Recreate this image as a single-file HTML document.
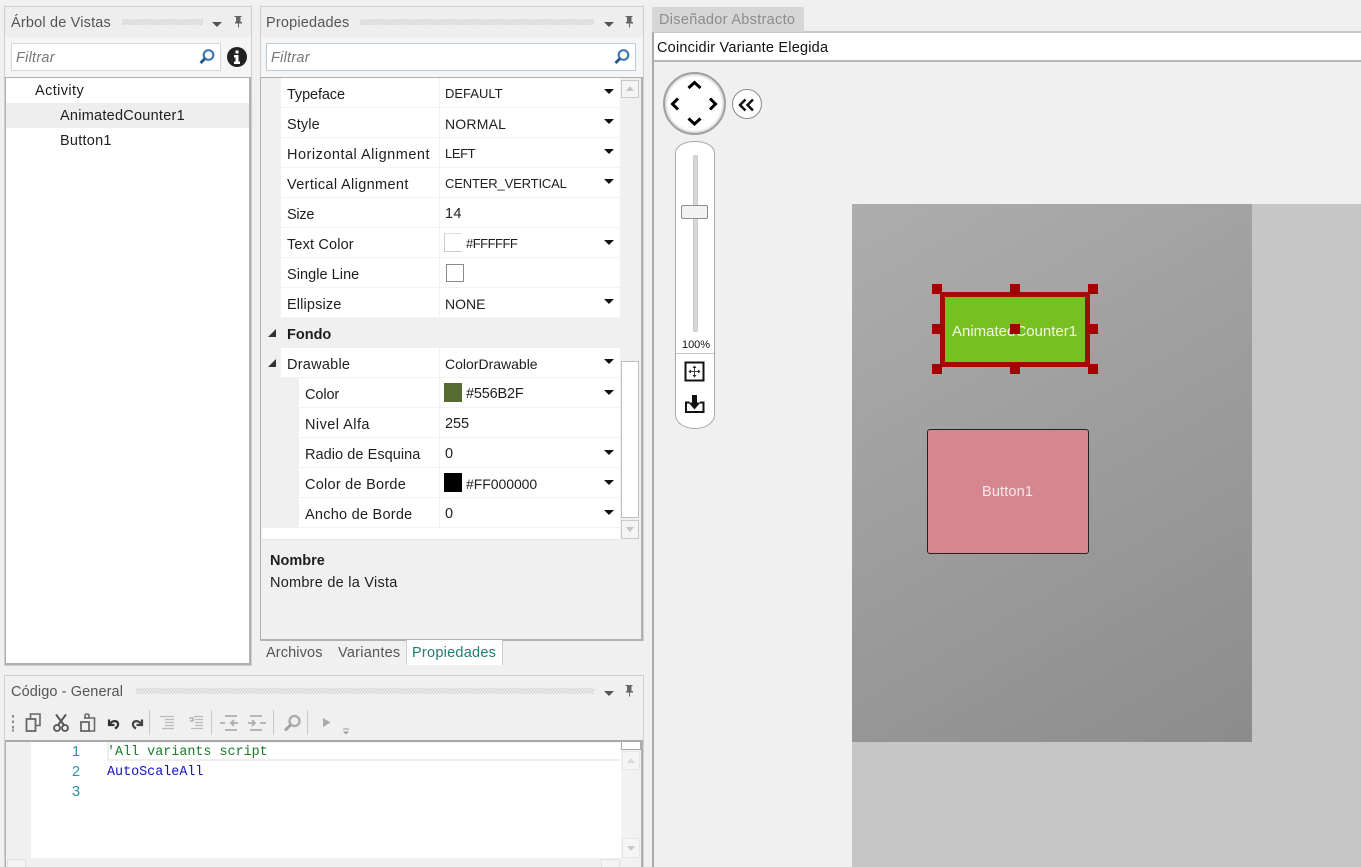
<!DOCTYPE html>
<html><head><meta charset="utf-8">
<style>
html,body{margin:0;padding:0;width:1361px;height:867px;overflow:hidden;background:#f0f0f0}
body{position:relative;font-family:"Liberation Sans",sans-serif;font-size:14.5px;color:#1e1e1e}
.b{position:absolute;box-sizing:border-box}
.t{position:absolute;white-space:nowrap;line-height:20px;letter-spacing:.25px;margin-top:1px}
.g{color:#555}
.it{font-style:italic;color:#777}
.grip{position:absolute;height:6px;background:repeating-conic-gradient(#d2d2d2 0 25%,transparent 0 50%) 0 0/3px 3px}
.dd{position:absolute;width:0;height:0;border-left:5px solid transparent;border-right:5px solid transparent;border-top:5px solid #111;margin-top:-1px}
.row{position:absolute;left:281px;width:339px;height:29px;background:#fff;border-bottom:1px solid #f2f2f2}
.sub{left:299px;width:321px}
.v{position:absolute;left:439px;width:1px;background:#f0f0f0}
svg{position:absolute;overflow:visible}
.mono{position:absolute;font-family:"Liberation Mono",monospace;font-size:13.4px;line-height:20px;white-space:pre}
</style></head><body>

<!-- LEFT PANEL -->
<div class="b" style="left:4px;top:6px;width:248px;height:660px;border:1px solid #cfcfcf;background:#f5f5f5"></div>
<div class="b" style="left:5px;top:7px;width:246px;height:30px;background:#eee"></div>
<div class="t g" style="left:11px;top:12px;letter-spacing:.18px">Árbol de Vistas</div>
<div class="grip" style="left:122px;top:19px;width:81px"></div>
<div class="dd" style="left:212px;top:23px;border-top-color:#555"></div>
<svg style="left:232px;top:15px" width="12" height="14" viewBox="0 0 12 14"><path d="M2.500 1h7v1h-1v5h1.500v1.500h-3v4h-1v-4h-3V7H4V2H2.500z" fill="#666"/></svg>
<div class="b" style="left:11px;top:43px;width:210px;height:28px;background:#fff;border:1px solid #d6d6d6"></div>
<div class="t it" style="left:16px;top:47px">Filtrar</div>
<svg style="left:198px;top:48px" width="18" height="18" viewBox="0 0 18 18"><circle cx="10.500" cy="7" r="4.800" fill="none" stroke="#3f78b4" stroke-width="2.200"/><path d="M7 10.500L2.500 15" stroke="#27557f" stroke-width="2.800"/></svg>
<svg style="left:227px;top:47px" width="20" height="20" viewBox="0 0 20 20"><circle cx="10" cy="10" r="10" fill="#222"/><path d="M8.500 3.500h3v3h-3zM7 8h4.500v6.500H13V17H7v-2.500h1.500V10.500H7z" fill="#fff"/></svg>
<div class="b" style="left:5px;top:77px;width:246px;height:588px;background:#fff;border:1px solid #b0b0b0;border-right-width:2px;border-bottom-width:2px"></div>
<div class="b" style="left:6px;top:103px;width:243px;height:25px;background:#eee"></div>
<div class="t" style="left:35px;top:80px;letter-spacing:.4px">Activity</div>
<div class="t" style="left:60px;top:105px">AnimatedCounter1</div>
<div class="t" style="left:60px;top:130px">Button1</div>

<!-- PROPERTIES PANEL -->
<div class="b" style="left:260px;top:6px;width:384px;height:635px;border:1px solid #cfcfcf;background:#f5f5f5"></div>
<div class="b" style="left:261px;top:7px;width:382px;height:30px;background:#eee"></div>
<div class="t g" style="left:266px;top:12px;letter-spacing:.18px">Propiedades</div>
<div class="grip" style="left:360px;top:19px;width:234px"></div>
<div class="dd" style="left:604px;top:23px;border-top-color:#555"></div>
<svg style="left:623px;top:15px" width="12" height="14" viewBox="0 0 12 14"><path d="M2.500 1h7v1h-1v5h1.500v1.500h-3v4h-1v-4h-3V7H4V2H2.500z" fill="#666"/></svg>
<div class="b" style="left:266px;top:43px;width:370px;height:28px;background:#fff;border:1px solid #b4cde0"></div>
<div class="t it" style="left:271px;top:47px">Filtrar</div>
<svg style="left:613px;top:48px" width="18" height="18" viewBox="0 0 18 18"><circle cx="10.500" cy="7" r="4.800" fill="none" stroke="#3f78b4" stroke-width="2.200"/><path d="M7 10.500L2.500 15" stroke="#27557f" stroke-width="2.800"/></svg>
<div class="b" style="left:260px;top:77px;width:383px;height:564px;background:#f0f0f0;border:1px solid #b0b0b0;border-right-width:2px;border-bottom-width:2px"></div>

<div class="row" style="top:78px"></div><div class="row" style="top:108px"></div><div class="row" style="top:138px"></div><div class="row" style="top:168px"></div><div class="row" style="top:198px"></div><div class="row" style="top:228px"></div><div class="row" style="top:258px"></div><div class="row" style="top:288px"></div>
<div class="row" style="top:348px"></div>
<div class="row sub" style="top:378px"></div><div class="row sub" style="top:408px"></div><div class="row sub" style="top:438px"></div><div class="row sub" style="top:468px"></div><div class="row sub" style="top:498px"></div>
<div class="b" style="left:262px;top:528px;width:358px;height:12px;background:#fff;border-bottom:1px solid #e8e8e8"></div>
<div class="v" style="top:78px;height:240px"></div>
<div class="v" style="top:348px;height:180px"></div>

<div class="t" style="left:287px;top:84px;letter-spacing:-.12px">Typeface</div><div class="t" style="left:445px;top:83px;font-size:13px;letter-spacing:0">DEFAULT</div><div class="dd" style="left:604px;top:90px"></div>
<div class="t" style="left:287px;top:114px;letter-spacing:.1px">Style</div><div class="t" style="left:445px;top:113px;font-size:14px;letter-spacing:.2px">NORMAL</div><div class="dd" style="left:604px;top:120px"></div>
<div class="t" style="left:287px;top:144px;letter-spacing:.5px">Horizontal Alignment</div><div class="t" style="left:445px;top:143px;font-size:13px;letter-spacing:-.4px">LEFT</div><div class="dd" style="left:604px;top:150px"></div>
<div class="t" style="left:287px;top:174px;letter-spacing:.36px">Vertical Alignment</div><div class="t" style="left:445px;top:173px;font-size:13px;letter-spacing:-.15px">CENTER_VERTICAL</div><div class="dd" style="left:604px;top:180px"></div>
<div class="t" style="left:287px;top:204px;letter-spacing:-.25px">Size</div><div class="t" style="left:445px;top:203px">14</div>
<div class="t" style="left:287px;top:234px;letter-spacing:.15px">Text Color</div><div class="b" style="left:444px;top:233px;width:18px;height:19px;background:#fff;border:1px solid #ccc;border-right:0;border-top:1px solid #ddd"></div><div class="t" style="left:466px;top:233px;font-size:13px;letter-spacing:-.5px">#FFFFFF</div><div class="dd" style="left:604px;top:241px"></div>
<div class="t" style="left:287px;top:264px;letter-spacing:.05px">Single Line</div><div class="b" style="left:446px;top:264px;width:18px;height:18px;background:#fff;border:1px solid #8a8a8a"></div>
<div class="t" style="left:287px;top:294px;letter-spacing:.14px">Ellipsize</div><div class="t" style="left:445px;top:293px;font-size:14px;letter-spacing:0">NONE</div><div class="dd" style="left:604px;top:300px"></div>

<svg style="left:267px;top:328px" width="10" height="10"><path d="M9 1v8H1z" fill="#333"/></svg>
<div class="t" style="left:287px;top:324px;font-weight:bold;letter-spacing:0">Fondo</div>
<svg style="left:267px;top:358px" width="10" height="10"><path d="M9 1v8H1z" fill="#333"/></svg>
<div class="t" style="left:287px;top:354px">Drawable</div><div class="t" style="left:445px;top:353px;font-size:14px;letter-spacing:0">ColorDrawable</div><div class="dd" style="left:604px;top:360px"></div>
<div class="t" style="left:305px;top:384px;letter-spacing:-.1px">Color</div><div class="b" style="left:444px;top:383px;width:18px;height:19px;background:#556B2F"></div><div class="t" style="left:466px;top:383px;letter-spacing:-.18px">#556B2F</div><div class="dd" style="left:604px;top:391px"></div>
<div class="t" style="left:305px;top:414px;letter-spacing:.45px">Nivel Alfa</div><div class="t" style="left:445px;top:413px;letter-spacing:-.08px">255</div>
<div class="t" style="left:305px;top:444px;letter-spacing:.06px">Radio de Esquina</div><div class="t" style="left:445px;top:443px">0</div><div class="dd" style="left:604px;top:451px"></div>
<div class="t" style="left:305px;top:474px">Color de Borde</div><div class="b" style="left:444px;top:473px;width:18px;height:19px;background:#000"></div><div class="t" style="left:466px;top:473px;font-size:14px;letter-spacing:-.05px">#FF000000</div><div class="dd" style="left:604px;top:481px"></div>
<div class="t" style="left:305px;top:504px">Ancho de Borde</div><div class="t" style="left:445px;top:503px">0</div><div class="dd" style="left:604px;top:511px"></div>

<!-- prop scrollbar -->
<div class="b" style="left:621px;top:80px;width:18px;height:18px;border:1px solid #c8c8c8;background:#f4f4f4"></div>
<svg style="left:625px;top:85px" width="10" height="7"><path d="M5 1l4 5H1z" fill="#c4c4c4"/></svg>
<div class="b" style="left:621px;top:361px;width:18px;height:157px;border:1px solid #bdbdbd;background:#fff"></div>
<div class="b" style="left:621px;top:520px;width:18px;height:19px;border:1px solid #c8c8c8;background:#f4f4f4"></div>
<svg style="left:625px;top:526px" width="10" height="7"><path d="M1 1h8L5 6z" fill="#c4c4c4"/></svg>

<div class="t" style="left:270px;top:550px;font-weight:bold;letter-spacing:0">Nombre</div>
<div class="t" style="left:270px;top:572px;letter-spacing:.25px">Nombre de la Vista</div>

<!-- tabs -->
<div class="t g" style="left:266px;top:642px;letter-spacing:.12px">Archivos</div>
<div class="t g" style="left:338px;top:642px">Variantes</div>
<div class="b" style="left:406px;top:640px;width:97px;height:25px;background:#fff;border-left:1px solid #ccc;border-right:1px solid #ccc"></div>
<div class="t" style="left:412px;top:642px;color:#1f7c72">Propiedades</div>

<!-- CODE PANEL -->
<div class="b" style="left:4px;top:675px;width:640px;height:200px;border:1px solid #cfcfcf;background:#f0f0f0"></div>
<div class="t g" style="left:11px;top:681px;letter-spacing:.1px">Código - General</div>
<div class="grip" style="left:136px;top:688px;width:458px"></div>
<div class="dd" style="left:604px;top:692px;border-top-color:#555"></div>
<svg style="left:623px;top:684px" width="12" height="14" viewBox="0 0 12 14"><path d="M2.500 1h7v1h-1v5h1.500v1.500h-3v4h-1v-4h-3V7H4V2H2.500z" fill="#666"/></svg>

<!-- toolbar -->
<svg style="left:0;top:700px" width="360" height="40" viewBox="0 0 360 40" fill="none">
<path d="M13 15v2.500M13 20.500v2.500M13 26v2.500M13 29.500v2" stroke="#888" stroke-width="2"/>
<path d="M30.500 19v-5h9.500v11.500h-4" stroke="#666" stroke-width="1.600"/><rect x="26.500" y="19" width="9" height="12" stroke="#666" stroke-width="1.800"/>
<path d="M56 14.500l8 10.500M66 14.500l-8 10.500" stroke="#555" stroke-width="2"/><circle cx="57" cy="28" r="3" stroke="#555" stroke-width="1.800"/><circle cx="65" cy="28" r="3" stroke="#555" stroke-width="1.800"/>
<path d="M85 18v-2.500c0-2 4-2 4 0V18M90 18h4.500v13H89" stroke="#666" stroke-width="1.600"/><path d="M84 18h6" stroke="#666" stroke-width="1.600"/><rect x="81" y="22" width="8" height="9" stroke="#666" stroke-width="1.800"/>
<path d="M109 19.500v5.500h5.500" stroke="#333" stroke-width="2.200"/><path d="M110 24c2-3.500 7-4 8-.5c.5 2-1 4-3 5" stroke="#333" stroke-width="2.300"/>
<path d="M142 19.500v5.500h-5.500" stroke="#444" stroke-width="2.200"/><path d="M141 24c-2-3.500-7-4-8-.5c-.5 2 1 4 3 5" stroke="#444" stroke-width="2.300"/>
<path d="M149.500 10v25M211.500 10v25M273.500 10v25M307.500 10v25" stroke="#c8c8c8"/>
<path d="M160 16.500h14M165 19.500h9M165 22.500h9M165 25.500h9M162 28.500h12" stroke="#bbb" stroke-width="1.200"/>
<path d="M194 16.500h9M195 19.500h8M195 22.500h8M195 25.500h8M191 28.500h12" stroke="#bbb" stroke-width="1.200"/><path d="M189 18h4v3h-3" stroke="#a8a8a8" stroke-width="1.300"/>
<path d="M225 16h12M220 23h5M238 23h-7M234 20l-3 3 3 3M225 30h12" stroke="#adadad" stroke-width="1.700"/>
<path d="M250 16h12M248 23h7M252 20l3 3-3 3M260 23h6M250 30h12" stroke="#adadad" stroke-width="1.700"/>
<circle cx="294.500" cy="21" r="5" stroke="#aaa" stroke-width="2.300"/><path d="M290.500 25l-5.500 5.500" stroke="#a0a0a0" stroke-width="3"/>
<path d="M323 18l7.500 4.500-7.500 4.500z" fill="#aaa"/>
<path d="M343 29h6" stroke="#999"/><path d="M343 31.500h6l-3 3z" fill="#999"/>
</svg>

<!-- editor -->
<div class="b" style="left:5px;top:740px;width:638px;height:127px;background:#fff;border-top:2px solid #aaa;border-left:1px solid #b0b0b0;border-right:2px solid #b0b0b0"></div>
<div class="b" style="left:6px;top:742px;width:25px;height:116px;background:#f0f0f0"></div>
<div class="b" style="left:6px;top:858px;width:615px;height:9px;background:#f0f0f0"></div>
<div class="b" style="left:7px;top:859px;width:19px;height:8px;background:#f4f4f4;border:1px solid #e2e2e2;border-bottom:0"></div>
<div class="b" style="left:601px;top:859px;width:19px;height:8px;background:#f4f4f4;border:1px solid #e2e2e2;border-bottom:0"></div>
<div class="b" style="left:621px;top:742px;width:20px;height:125px;background:#f2f2f2"></div>
<div class="b" style="left:621px;top:741px;width:20px;height:9px;background:#fff;border:1px solid #aaa"></div>
<div class="b" style="left:622px;top:751px;width:18px;height:19px;background:#f5f5f5;border:1px solid #e6e6e6"></div>
<svg style="left:626px;top:757px" width="10" height="7"><path d="M5 1l4 5H1z" fill="#d8d8d8"/></svg>
<div class="b" style="left:622px;top:838px;width:18px;height:20px;background:#f5f5f5;border:1px solid #e6e6e6"></div>
<svg style="left:626px;top:845px" width="10" height="7"><path d="M1 1h8L5 6z" fill="#c8c8c8"/></svg>
<div class="b" style="left:107px;top:742px;width:513px;height:19px;background:#fff;border-left:2px solid #eee;border-bottom:2px solid #eee;border-top:1px solid #f4f4f4"></div>
<div class="t" style="left:72px;top:741px;color:#2b91af;letter-spacing:0">1</div>
<div class="t" style="left:72px;top:761px;color:#2b91af;letter-spacing:0">2</div>
<div class="t" style="left:72px;top:781px;color:#2b91af;letter-spacing:0">3</div>
<div class="mono" style="left:107px;top:743px;color:#1a7a2a">'All variants script</div>
<div class="mono" style="left:107px;top:763px;color:#1212c4">AutoScaleAll</div>

<!-- DESIGNER -->
<div class="b" style="left:652px;top:31px;width:709px;height:836px;background:#f0f0f0;border-left:2px solid #aaa;border-top:2px solid #c8c8c8"></div>
<div class="b" style="left:652px;top:7px;width:152px;height:25px;background:#d6d6d6"></div>
<div class="t" style="left:659px;top:9px;color:#8c8c8c;letter-spacing:.3px">Diseñador Abstracto</div>
<div class="b" style="left:654px;top:33px;width:707px;height:29px;background:#fff;border-bottom:2px solid #b8b8b8"></div>
<div class="t" style="left:657px;top:37px;color:#111;letter-spacing:.21px">Coincidir Variante Elegida</div>

<div class="b" style="left:852px;top:204px;width:509px;height:663px;background:#c6c6c6"></div>
<div class="b" style="left:852px;top:204px;width:400px;height:538px;background:linear-gradient(150deg,#adadad 0%,#8c8c8c 100%)"></div>

<!-- Green widget -->
<div class="b" style="left:940px;top:292px;width:150px;height:75px;background:#76c120;border:5px solid #a30b0b"></div>
<div class="t" style="left:952px;top:321px;color:#f2f7e8;letter-spacing:0;font-size:15px">AnimatedCounter1</div>
<div class="b" style="left:932px;top:284px;width:10px;height:10px;background:#a30000"></div>
<div class="b" style="left:1010px;top:284px;width:10px;height:10px;background:#a30000"></div>
<div class="b" style="left:1088px;top:284px;width:10px;height:10px;background:#a30000"></div>
<div class="b" style="left:932px;top:324px;width:10px;height:10px;background:#a30000"></div>
<div class="b" style="left:1010px;top:324px;width:10px;height:10px;background:#a30000"></div>
<div class="b" style="left:1088px;top:324px;width:10px;height:10px;background:#a30000"></div>
<div class="b" style="left:932px;top:364px;width:10px;height:10px;background:#a30000"></div>
<div class="b" style="left:1010px;top:364px;width:10px;height:10px;background:#a30000"></div>
<div class="b" style="left:1088px;top:364px;width:10px;height:10px;background:#a30000"></div>

<!-- Button -->
<div class="b" style="left:927px;top:429px;width:162px;height:125px;background:#d6868e;border:1px solid #222;border-radius:3px"></div>
<div class="t" style="left:982px;top:481px;color:#f6eaea;letter-spacing:.15px">Button1</div>

<!-- Nav -->
<div class="b" style="left:663px;top:72px;width:63px;height:63px;border-radius:50%;background:#fff;border:2px solid #a0a0a0;box-shadow:inset 0 0 3px #999"></div>
<svg style="left:663px;top:72px" width="64" height="64" fill="none" stroke="#000" stroke-width="3"><path d="M25.500 16l6-5.500 6 5.500M25.500 46.500l6 5.500 6-5.500M15 26.500l-5.500 5.500 5.500 5.500M47 26.500l5.500 5.500-5.500 5.500"/></svg>
<div class="b" style="left:732px;top:89px;width:30px;height:30px;border-radius:50%;background:#fff;border:1.500px solid #8a8a8a"></div>
<svg style="left:732px;top:89px" width="30" height="30" fill="none" stroke="#111" stroke-width="2.500"><path d="M13.500 10.500l-5.500 5.500 5.500 5.500M21 10.500l-5.500 5.500 5.500 5.500"/></svg>

<!-- Slider -->
<div class="b" style="left:675px;top:141px;width:40px;height:288px;background:#fff;border:1px solid #a8a8a8;border-radius:19px 19px 20px 20px / 12px 12px 14px 14px"></div>
<div class="b" style="left:693px;top:155px;width:5px;height:177px;background:#d8d8d8;border:1px solid #c8c8c8;border-radius:2px"></div>
<div class="b" style="left:681px;top:205px;width:27px;height:14px;background:#f2f2f2;border:1px solid #8e8e8e;border-radius:2px"></div>
<div class="b" style="left:676px;top:353px;width:38px;height:1px;background:#c8c8c8"></div>
<div class="t" style="left:682px;top:334px;font-size:11px;letter-spacing:-.05px;color:#111">100%</div>
<svg style="left:684px;top:361px" width="22" height="22" fill="none"><rect x="1.500" y="1.500" width="18" height="18" stroke="#111" stroke-width="2"/><path d="M10.500 6v9M6 10.500h9" stroke="#444"/><path d="M10.500 4.500l-2 2.500h4zM10.500 16.500l-2-2.500h4zM4.500 10.500l2.500-2v4zM16.500 10.500l-2.500-2v4z" fill="#222"/></svg>
<svg style="left:684px;top:394px" width="22" height="22" fill="none"><path d="M5.500 8.500H2V18h17.500V8.500H16" stroke="#111" stroke-width="2"/><path d="M8 1h5v7.500h3.500l-6 7-6-7H8z" fill="#111"/></svg>
</body></html>
